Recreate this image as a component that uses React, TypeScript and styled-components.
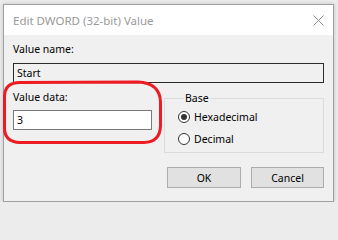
import React from 'react'
import styled, { createGlobalStyle } from 'styled-components'

const GlobalStyle = createGlobalStyle`
    html, body {
        margin: 0;
        padding: 0;
        background: #ececec;
        overflow: hidden;
    }
    body {
        font-family: "Noto Sans", "Liberation Sans", sans-serif;
        font-size: 10.5px;
        color: #000;
    }
`

const Window = styled.div`
    position: relative;
    width: 329px;
    margin: 4px 0 0 3px;
    border: 1px solid #a0a0a0;
    background: #f0f0f0;
    box-shadow: 0 0 4px rgba(0, 0, 0, 0.18);
`

const TitleBar = styled.div`
    height: 30px;
    background: #fff;
    display: flex;
    align-items: center;
    justify-content: space-between;
    padding: 0 9px 0 9px;
`

const Title = styled.span`
    font-size: 11.5px;
    color: #999;
`

const Body = styled.div`
    padding: 7px 9px 13px 9px;
`

const Label = styled.div`
    line-height: 15px;
`

const NameField = styled.div`
    margin-top: 6px;
    height: 18px;
    border: 1px solid #2b2b2b;
    background: #f0f0f0;
    display: flex;
    align-items: center;
    padding: 0 3px;
`

const DataRow = styled.div`
    display: flex;
    gap: 12px;
`

const DataColumn = styled.div`
    width: 139px;
    padding-top: 7px;
`

const DataInput = styled.div`
    margin-top: 5px;
    height: 18px;
    border: 1px solid #7a7a7a;
    background: #fff;
    display: flex;
    align-items: center;
    padding: 0 3px;
`

const GroupBox = styled.fieldset`
    margin: 8px 0 0 0;
    flex: 1;
    padding: 0 0 5px 13px;
    border: 1px solid #dcdcdc;
    min-width: 0;
`

const Legend = styled.legend`
    margin-left: 6px;
    padding: 0 1px;
    line-height: 15px;
`

const RadioRow = styled.label<{ first?: boolean }>`
    display: flex;
    align-items: center;
    gap: 4px;
    height: 16px;
    margin-top: ${p => (p.first ? 3 : 6)}px;
`

const RadioCircle = styled.span<{ checked?: boolean }>`
    position: relative;
    width: 10px;
    height: 10px;
    border: 1px solid #333;
    border-radius: 50%;
    background: #fff;
    &::after {
        content: '';
        display: ${p => (p.checked ? 'block' : 'none')};
        position: absolute;
        left: 2px;
        top: 2px;
        width: 6px;
        height: 6px;
        border-radius: 50%;
        background: #333;
    }
`

const ButtonRow = styled.div`
    display: flex;
    justify-content: flex-end;
    gap: 10px;
    margin-top: 14px;
`

const Button = styled.button<{ w: number }>`
    width: ${p => p.w}px;
    height: 21px;
    border: 1px solid #adadad;
    background: #e1e1e1;
    font-family: inherit;
    font-size: 10.5px;
    color: #000;
    padding: 0;
`

const Annotation = styled.svg`
    position: absolute;
    left: -4px;
    top: -5px;
    pointer-events: none;
`

function CloseIcon() {
    return (
        <svg width="11" height="11" viewBox="0 0 11 11">
            <path d="M0.5 0.5 L10.5 10.5 M10.5 0.5 L0.5 10.5" stroke="#8c8c8c" strokeWidth="1" fill="none" />
        </svg>
    )
}

export default function App() {
    return (
        <>
            <GlobalStyle />
            <Window>
                <TitleBar>
                    <Title>Edit DWORD (32-bit) Value</Title>
                    <CloseIcon />
                </TitleBar>
                <Body>
                    <Label>Value name:</Label>
                    <NameField>Start</NameField>
                    <DataRow>
                        <DataColumn>
                            <Label>Value data:</Label>
                            <DataInput>3</DataInput>
                        </DataColumn>
                        <GroupBox>
                            <Legend>Base</Legend>
                            <RadioRow first>
                                <RadioCircle checked />
                                Hexadecimal
                            </RadioRow>
                            <RadioRow>
                                <RadioCircle />
                                Decimal
                            </RadioRow>
                        </GroupBox>
                    </DataRow>
                    <ButtonRow>
                        <Button w={74}>OK</Button>
                        <Button w={73}>Cancel</Button>
                    </ButtonRow>
                </Body>
                <Annotation width="170" height="150">
                    <path
                        d="M20 82.5 L138 82 Q160 83 160.5 102 L160.5 126 Q160 142 144 142.5 L20 142.5 Q4.5 142 4.5 128 L4.5 96 Q5 82.5 20 82.5 Z"
                        stroke="#ec1c24"
                        strokeWidth="3"
                        fill="none"
                    />
                </Annotation>
            </Window>
        </>
    )
}
